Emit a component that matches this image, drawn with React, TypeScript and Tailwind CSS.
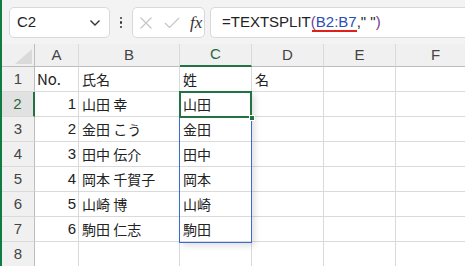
import React from "react";

const cols = [
  { w: "w-[33px]" },
  { w: "w-[44px]", l: "A" },
  { w: "w-[101px]", l: "B" },
  { w: "w-[72px]", l: "C" },
  { w: "w-[72px]", l: "D" },
  { w: "w-[72px]", l: "E" },
  { w: "w-[80px]", l: "F" },
];

const rows: [string, string, string, string][] = [
  ["No.", "氏名", "姓", "名"],
  ["1", "山田 幸", "山田", ""],
  ["2", "金田 こう", "金田", ""],
  ["3", "田中 伝介", "田中", ""],
  ["4", "岡本 千賀子", "岡本", ""],
  ["5", "山崎 博", "山崎", ""],
  ["6", "駒田 仁志", "駒田", ""],
  ["", "", "", ""],
];

const font = { fontFamily: '"Noto Sans CJK JP", "Noto Sans", sans-serif' };

export default function App() {
  return (
    <div className="w-[465px] h-[266px] overflow-hidden bg-white border-l-2 border-[#107c41] text-[#222]" style={font}>
      {/* toolbar */}
      <div className="h-[44px] bg-[#f3f3f3] flex items-center pt-[1px]">
        <div className="ml-[7px] w-[101px] h-[31px] bg-white border border-[#d9d9d9] rounded-[5px] flex items-center pl-[7px] pr-[8px]">
          <span className="text-[15px] text-[#222] flex-1" style={{ fontFamily: '"Liberation Sans", sans-serif' }}>C2</span>
          <svg width="12" height="8" viewBox="0 0 12 8"><path d="M1.5 1.5 L6 6 L10.5 1.5" fill="none" stroke="#333" strokeWidth="1.4" /></svg>
        </div>
        <div className="w-[22px] flex flex-col items-center gap-[2px]">
          <div className="w-[2.5px] h-[2.5px] bg-[#333] rounded-full" />
          <div className="w-[2.5px] h-[2.5px] bg-[#333] rounded-full" />
          <div className="w-[2.5px] h-[2.5px] bg-[#333] rounded-full" />
        </div>
        <div className="w-[73px] h-[31px] bg-white border border-[#d9d9d9] rounded-[5px] flex items-center pl-[6px]">
          <svg width="14" height="14" viewBox="0 0 14 14"><path d="M1.5 1.5 L12.5 12.5 M12.5 1.5 L1.5 12.5" stroke="#c4c4c4" strokeWidth="1.1" fill="none" /></svg>
          <svg className="ml-[11px]" width="16" height="12" viewBox="0 0 16 12"><path d="M1 6 L5.5 10.5 L15 1" stroke="#c4c4c4" strokeWidth="1.1" fill="none" /></svg>
          <span className="ml-[10px] text-[17px] italic text-[#333] leading-none" style={{ fontFamily: '"Liberation Serif", serif' }}>fx</span>
        </div>
        <div className="ml-[5px] flex-1 h-[31px] bg-white border border-[#d9d9d9] border-r-0 rounded-l-[5px] flex items-center pl-[11px]">
          <span className="text-[15px] text-[#222] whitespace-nowrap relative" style={{ fontFamily: '"Liberation Sans", sans-serif' }}>
            =TEXTSPLIT<span className="relative text-[#7a3c8a]">(<span className="text-[#2b4fb5]">B2:B7</span><span className="absolute left-[1px] right-0 -bottom-[2px] h-[2px] bg-[#e0201b]" /></span>,"&nbsp;"<span className="text-[#7a3c8a]">)</span>
          </span>
        </div>
      </div>

      {/* grid */}
      <div className="relative">
        {/* header row */}
        <div className="flex h-[23px]">
          {cols.map((c, i) => (
            <div
              key={i}
              className={`${c.w} shrink-0 bg-[#f0f0f0] flex items-center justify-center text-[15px] ${
                c.l === "C"
                  ? "bg-[#e1e1e1] border-b-2 border-[#217346] text-[#1e6b40]"
                  : "border-b border-[#bdbdbd] text-[#444]"
              } ${i === 0 ? "border-r border-r-[#bdbdbd] relative" : "border-r border-r-[#dadada]"}`}
              style={{ fontFamily: '"Liberation Sans", sans-serif' }}
            >
              {i === 0 ? (
                <svg className="absolute right-[2px] bottom-[2px]" width="17" height="15" viewBox="0 0 17 15"><path d="M17 0 L17 15 L0 15 Z" fill="#dadada" /></svg>
              ) : (
                c.l
              )}
            </div>
          ))}
        </div>
        {rows.map((r, ri) => (
          <div key={ri} className="flex h-[25px]">
            <div
              className={`w-[33px] shrink-0 flex items-center justify-center text-[15px] border-b border-[#dadada] ${
                ri === 1
                  ? "bg-[#e1e1e1] border-r-2 border-r-[#217346] text-[#1e6b40]"
                  : "bg-[#f0f0f0] border-r border-r-[#bdbdbd] text-[#444]"
              }`}
              style={{ fontFamily: '"Liberation Sans", sans-serif' }}
            >
              {ri + 1}
            </div>
            <div
              className={`w-[44px] shrink-0 border-r border-b border-[#dadada] flex items-center text-[15px] px-[2px] ${
                ri === 0 ? "justify-start" : "justify-end"
              }`}
              style={{ fontFamily: ri === 0 ? font.fontFamily : '"Liberation Sans", sans-serif' }}
            >
              {r[0]}
            </div>
            <div className="w-[101px] shrink-0 border-r border-b border-[#dadada] flex items-center text-[14px] px-[3px] whitespace-nowrap">
              {r[1]}
            </div>
            <div className="w-[72px] shrink-0 border-r border-b border-[#dadada] flex items-center text-[14px] px-[3px]">
              {r[2]}
            </div>
            <div className="w-[72px] shrink-0 border-r border-b border-[#dadada] flex items-center text-[14px] px-[3px]">
              {r[3]}
            </div>
            <div className="w-[72px] shrink-0 border-r border-b border-[#dadada]" />
            <div className="w-[80px] shrink-0 border-b border-[#dadada]" />
          </div>
        ))}
        {/* spill range */}
        <div className="absolute left-[177px] top-[47px] w-[73px] h-[152px] border border-[#3a6bd1] shadow-[3px_3px_6px_rgba(0,0,0,0.12)]" />
        {/* active cell */}
        <div className="absolute left-[177px] top-[47px] w-[73px] h-[27px] border-2 border-[#217346]" />
        <div className="absolute left-[247px] top-[71px] w-[6px] h-[6px] bg-[#217346] border border-white" />
      </div>
    </div>
  );
}
